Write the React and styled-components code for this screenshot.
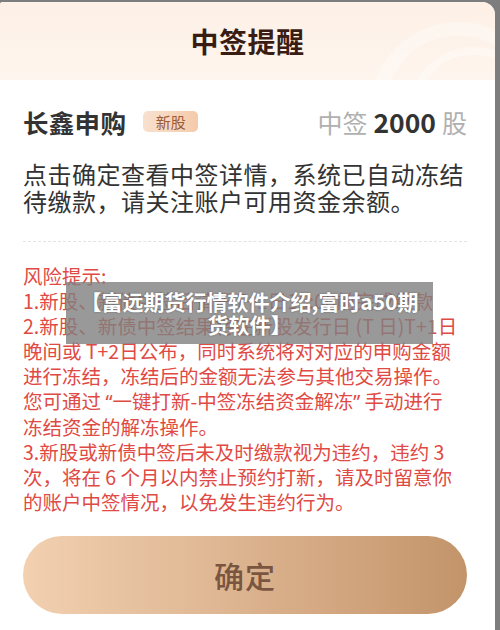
import React from "react";
import styled, { createGlobalStyle } from "styled-components";

const GlobalStyle = createGlobalStyle`
  html, body {
    margin: 0;
    padding: 0;
    background: #7d7d7d;
  }
  body {
    font-family: "Noto Sans CJK SC", "Noto Sans", sans-serif;
  }
`;

const Screen = styled.div`
  width: 500px;
  height: 630px;
  padding: 2px 5px 0 0;
  box-sizing: border-box;
  overflow: hidden;
`;

const Card = styled.div`
  height: 628px;
  background: #ffffff;
  border-radius: 3px 13px 0 0;
  overflow: hidden;
  display: flex;
  flex-direction: column;
`;

const Header = styled.div`
  position: relative;
  height: 78px;
  display: flex;
  align-items: center;
  justify-content: center;
  background: linear-gradient(180deg, #fdf0e6 0%, #fef5ee 100%);
  overflow: hidden;
`;

const Ring = styled.div`
  position: absolute;
  border-radius: 50%;
  border: ${(p) => p.$w}px solid rgba(255, 255, 255, 0.3);
  width: ${(p) => p.$size}px;
  height: ${(p) => p.$size}px;
  left: ${(p) => p.$x}px;
  top: ${(p) => p.$y}px;
`;

const Title = styled.h1`
  position: relative;
  margin: 0;
  font-size: 28px;
  font-weight: 700;
  color: #3a1d12;
  letter-spacing: 0.5px;
  line-height: 1;
`;

const Body = styled.div`
  padding: 26px 28px 0 23px;
  display: flex;
  flex-direction: column;
`;

const StockRow = styled.div`
  display: flex;
  align-items: center;
  height: 30px;
`;

const StockName = styled.span`
  font-size: 25.5px;
  font-weight: 700;
  color: #333333;
  letter-spacing: 0.3px;
`;

const Badge = styled.span`
  margin-left: 17px;
  width: 55px;
  height: 21px;
  border-radius: 5px;
  background: linear-gradient(90deg, #f8e1cf 0%, #f4cbab 100%);
  color: #9c5c37;
  font-size: 15px;
  display: flex;
  align-items: center;
  justify-content: center;
  line-height: 1;
`;

const Amount = styled.span`
  margin-left: auto;
  display: flex;
  align-items: baseline;
  gap: 6px;
  font-size: 25px;
  color: #b0b0b0;
`;

const Count = styled.b`
  color: #333333;
  font-weight: 700;
  font-size: 26.5px;
`;

const Notice = styled.p`
  margin: 24px 0 0;
  font-size: 24px;
  line-height: 27px;
  color: #333333;
  letter-spacing: 0.5px;
  white-space: nowrap;
`;

const Divider = styled.hr`
  margin: 27px 0 0;
  border: none;
  border-top: 1px dashed #e3e3e3;
`;

const Risk = styled.div`
  position: relative;
  margin-top: 21px;
  color: #df4a44;
  font-size: 19.5px;
  line-height: 25px;
  white-space: nowrap;
`;

const RiskLine = styled.div``;

const Quote = styled.span`
  font-family: "Noto Sans", sans-serif;
`;

const Watermark = styled.div`
  position: absolute;
  left: 43px;
  top: 19px;
  width: 367px;
  height: 62px;
  box-sizing: border-box;
  background: rgba(128, 128, 128, 0.8);
  color: #ffffff;
  font-size: 21px;
  font-weight: 700;
  line-height: 23px;
  text-align: center;
  padding-top: 8px;
  text-shadow: 0 0 2px rgba(0, 0, 0, 0.35);
`;

const ConfirmButton = styled.button`
  margin-top: 22px;
  height: 78px;
  border: none;
  border-radius: 39px;
  background: linear-gradient(90deg, #f2d0b0 0%, #dcb38f 50%, #c3946a 100%);
  color: #7a5540;
  font-family: inherit;
  font-size: 30px;
  font-weight: 500;
  letter-spacing: 1px;
  cursor: pointer;
`;

export default function App() {
  return (
    <>
      <GlobalStyle />
      <Screen>
        <Card>
          <Header>
            <Ring $size={150} $x={370} $y={20} $w={14} />
            <Ring $size={110} $x={410} $y={45} $w={8} />
            <Title>中签提醒</Title>
          </Header>
          <Body>
            <StockRow>
              <StockName>长鑫申购</StockName>
              <Badge>新股</Badge>
              <Amount>
                中签<Count>2000</Count>股
              </Amount>
            </StockRow>
            <Notice>
              点击确定查看中签详情，系统已自动冻结
              <br />
              待缴款，请关注账户可用资金余额。
            </Notice>
            <Divider />
            <Risk>
              <RiskLine>风险提示:</RiskLine>
              <RiskLine>1.新股、新债中签后请于T+1日16:00前完成缴款</RiskLine>
              <RiskLine>2.新股、新债中签结果将在新股发行日 (T 日)T+1日</RiskLine>
              <RiskLine>晚间或 T+2日公布，同时系统将对对应的申购金额</RiskLine>
              <RiskLine>进行冻结，冻结后的金额无法参与其他交易操作。</RiskLine>
              <RiskLine>
                您可通过 <Quote>“</Quote>一键打新-中签冻结资金解冻<Quote>”</Quote> 手动进行
              </RiskLine>
              <RiskLine>冻结资金的解冻操作。</RiskLine>
              <RiskLine>3.新股或新债中签后未及时缴款视为违约，违约 3</RiskLine>
              <RiskLine>次，将在 6 个月以内禁止预约打新，请及时留意你</RiskLine>
              <RiskLine>的账户中签情况，以免发生违约行为。</RiskLine>
              <Watermark>
                【富远期货行情软件介绍,富时a50期
                <br />
                货软件】
              </Watermark>
            </Risk>
            <ConfirmButton>确定</ConfirmButton>
          </Body>
        </Card>
      </Screen>
    </>
  );
}
